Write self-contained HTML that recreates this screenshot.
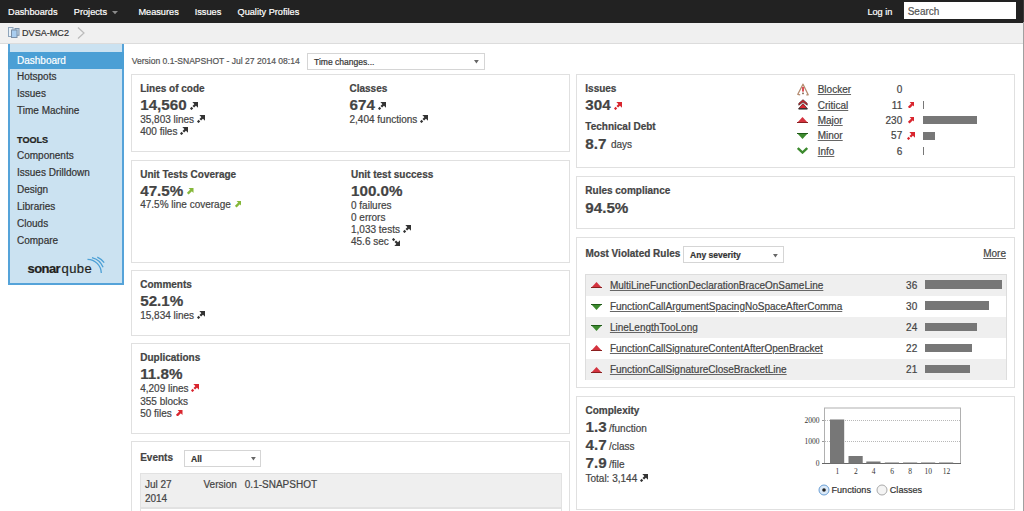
<!DOCTYPE html>
<html><head><meta charset="utf-8"><title>SonarQube Dashboard</title>
<style>
html,body{margin:0;padding:0;}
body{width:1024px;height:511px;overflow:hidden;position:relative;background:#fff;font-family:"Liberation Sans",sans-serif;}
.t{position:absolute;white-space:nowrap;line-height:1;-webkit-text-stroke:0.2px currentColor;}
.r{position:absolute;}
svg{display:block;}
u{text-decoration:underline;text-underline-offset:0.6px;text-decoration-color:#666;}
</style></head><body>
<div class="r" style="left:0px;top:0px;width:1024px;height:22.5px;background:#222;"></div>
<div class="t" style="left:8.00px;top:8.11px;font-size:9.2px;color:#fff;">Dashboards</div>
<div class="t" style="left:73.80px;top:8.11px;font-size:9.2px;color:#fff;">Projects</div>
<div class="t" style="left:138.40px;top:8.11px;font-size:9.2px;color:#fff;">Measures</div>
<div class="t" style="left:194.70px;top:8.11px;font-size:9.2px;color:#fff;">Issues</div>
<div class="t" style="left:237.50px;top:8.11px;font-size:9.2px;color:#fff;">Quality Profiles</div>
<div class="t" style="left:867.40px;top:8.11px;font-size:9.2px;color:#fff;">Log in</div>
<svg class="r" style="left:112.3px;top:10.5px" width="6" height="4"><polygon points="0,0 6,0 3,3.3" fill="#8a8a8a"/></svg>
<div class="r" style="left:904px;top:2px;width:111.5px;height:16.8px;background:#fff;"></div>
<div class="t" style="left:907.70px;top:6.83px;font-size:10px;color:#555;">Search</div>
<div class="r" style="left:0px;top:22.5px;width:1024px;height:21.5px;background:#f0f0f0;border-bottom:1px solid #dcdcdc;box-sizing:border-box;"></div>
<div class="t" style="left:22.00px;top:28.59px;font-size:9.1px;color:#333;">DVSA-MC2</div>
<svg class="r" style="left:77px;top:27px" width="8" height="12"><polyline points="1,0.5 7,6 1,11.5" fill="none" stroke="#bbb" stroke-width="1.2"/></svg>
<svg class="r" style="left:7px;top:26px" width="14" height="14" viewBox="7 26 14 14"><rect x="8.5" y="27.5" width="4.5" height="9" fill="#e8f0f7" stroke="#8fa5bb" stroke-width="1"/><rect x="15" y="28.5" width="4" height="6.8" fill="#c6dcef" stroke="#7d93ab" stroke-width="1"/><rect x="11.5" y="30" width="5.5" height="7.5" fill="#a9cdef" stroke="#7b8fa6" stroke-width="1"/></svg>
<div class="r" style="left:1023px;top:22px;width:1px;height:489px;background:#a0a0a0;"></div>
<div class="r" style="left:1023px;top:0px;width:1px;height:22px;background:#3a3a3a;"></div>
<div class="r" style="left:8px;top:44px;width:116px;height:241px;background:#cbe2f1;border:2px solid #55a3d9;border-top:none;box-sizing:border-box;"></div>
<div class="r" style="left:8px;top:52px;width:116px;height:17px;background:#4b9fd5;"></div>
<div class="t" style="left:17.00px;top:55.53px;font-size:10px;color:#fff;">Dashboard</div>
<div class="t" style="left:17.00px;top:72.33px;font-size:10px;color:#333;">Hotspots</div>
<div class="t" style="left:17.00px;top:89.23px;font-size:10px;color:#333;">Issues</div>
<div class="t" style="left:17.00px;top:106.13px;font-size:10px;color:#333;">Time Machine</div>
<div class="t" style="left:17.00px;top:135.69px;font-size:9.1px;font-weight:bold;color:#222;">TOOLS</div>
<div class="t" style="left:17.00px;top:151.03px;font-size:10px;color:#333;">Components</div>
<div class="t" style="left:17.00px;top:168.03px;font-size:10px;color:#333;">Issues Drilldown</div>
<div class="t" style="left:17.00px;top:185.03px;font-size:10px;color:#333;">Design</div>
<div class="t" style="left:17.00px;top:202.03px;font-size:10px;color:#333;">Libraries</div>
<div class="t" style="left:17.00px;top:219.03px;font-size:10px;color:#333;">Clouds</div>
<div class="t" style="left:17.00px;top:236.03px;font-size:10px;color:#333;">Compare</div>
<div class="t" style="left:27.60px;top:262.09px;font-size:13px;font-weight:bold;color:#231f20;letter-spacing:-0.6px;">sonar</div>
<div class="t" style="left:61.50px;top:262.09px;font-size:13px;color:#231f20;letter-spacing:0.4px;">qube</div>
<svg class="r" style="left:80px;top:250px" width="30" height="30" viewBox="80 250 30 30"><g fill="none" stroke="#4b9fd5" stroke-width="1.3"><path d="M87.5,259.3 A14,14 0 0 1 101.3,273"/><path d="M92,257.6 A16.4,16.4 0 0 1 103.1,267.3"/><path d="M97.3,257.2 A19.2,19.2 0 0 1 104.2,262.6"/></g></svg>
<div class="t" style="left:131.70px;top:56.76px;font-size:8.55px;color:#555;">Version 0.1-SNAPSHOT - Jul 27 2014 08:14</div>
<div class="r" style="left:307px;top:53px;width:178px;height:16.5px;background:#fff;border:1px solid #d5d5d5;box-sizing:border-box;"></div>
<div class="t" style="left:314.00px;top:58.26px;font-size:8.55px;color:#333;">Time changes...</div>
<svg class="r" style="left:474.2px;top:60.3px" width="5" height="4"><polygon points="0,0 4.8,0 2.4,3.6" fill="#666"/></svg>
<div class="r" style="left:131px;top:74px;width:439px;height:78px;border:1px solid #e0e0e0;box-sizing:border-box;background:#fff;"></div>
<div class="r" style="left:131px;top:160px;width:439px;height:103px;border:1px solid #e0e0e0;box-sizing:border-box;background:#fff;"></div>
<div class="r" style="left:131px;top:270px;width:439px;height:66px;border:1px solid #e0e0e0;box-sizing:border-box;background:#fff;"></div>
<div class="r" style="left:131px;top:343px;width:439px;height:91px;border:1px solid #e0e0e0;box-sizing:border-box;background:#fff;"></div>
<div class="r" style="left:131px;top:441px;width:439px;height:80px;border:1px solid #e0e0e0;box-sizing:border-box;background:#fff;"></div>
<div class="r" style="left:576px;top:74px;width:439px;height:94px;border:1px solid #e0e0e0;box-sizing:border-box;background:#fff;"></div>
<div class="r" style="left:576px;top:176px;width:439px;height:53px;border:1px solid #e0e0e0;box-sizing:border-box;background:#fff;"></div>
<div class="r" style="left:576px;top:237px;width:439px;height:151px;border:1px solid #e0e0e0;box-sizing:border-box;background:#fff;"></div>
<div class="r" style="left:576px;top:396px;width:439px;height:113.5px;border:1px solid #e0e0e0;box-sizing:border-box;background:#fff;"></div>
<div class="t" style="left:140.20px;top:83.63px;font-size:10px;font-weight:bold;color:#444;">Lines of code</div>
<div class="t" style="left:140.20px;top:96.93px;font-size:15.2px;font-weight:bold;color:#444;">14,560</div>
<div class="t" style="left:140.20px;top:114.63px;font-size:10px;color:#444;">35,803 lines</div>
<div class="t" style="left:140.20px;top:126.63px;font-size:10px;color:#444;">400 files</div>
<div class="t" style="left:349.50px;top:83.63px;font-size:10px;font-weight:bold;color:#444;">Classes</div>
<div class="t" style="left:349.50px;top:96.93px;font-size:15.2px;font-weight:bold;color:#444;">674</div>
<div class="t" style="left:349.50px;top:114.63px;font-size:10px;color:#444;">2,404 functions</div>
<div class="t" style="left:140.20px;top:169.53px;font-size:10px;font-weight:bold;color:#444;">Unit Tests Coverage</div>
<div class="t" style="left:140.20px;top:182.83px;font-size:15.2px;font-weight:bold;color:#444;">47.5%</div>
<div class="t" style="left:140.20px;top:200.33px;font-size:10px;color:#444;">47.5% line coverage</div>
<div class="t" style="left:351.00px;top:169.53px;font-size:10px;font-weight:bold;color:#444;">Unit test success</div>
<div class="t" style="left:351.00px;top:182.83px;font-size:15.2px;font-weight:bold;color:#444;">100.0%</div>
<div class="t" style="left:351.00px;top:201.23px;font-size:10px;color:#444;">0 failures</div>
<div class="t" style="left:351.00px;top:212.63px;font-size:10px;color:#444;">0 errors</div>
<div class="t" style="left:351.00px;top:225.13px;font-size:10px;color:#444;">1,033 tests</div>
<div class="t" style="left:351.00px;top:236.83px;font-size:10px;color:#444;">45.6 sec</div>
<div class="t" style="left:140.20px;top:279.63px;font-size:10px;font-weight:bold;color:#444;">Comments</div>
<div class="t" style="left:140.20px;top:293.03px;font-size:15.2px;font-weight:bold;color:#444;">52.1%</div>
<div class="t" style="left:140.20px;top:310.53px;font-size:10px;color:#444;">15,834 lines</div>
<div class="t" style="left:140.20px;top:353.03px;font-size:10px;font-weight:bold;color:#444;">Duplications</div>
<div class="t" style="left:140.20px;top:366.13px;font-size:15.2px;font-weight:bold;color:#444;">11.8%</div>
<div class="t" style="left:140.20px;top:384.43px;font-size:10px;color:#444;">4,209 lines</div>
<div class="t" style="left:140.20px;top:396.63px;font-size:10px;color:#444;">355 blocks</div>
<div class="t" style="left:140.20px;top:408.83px;font-size:10px;color:#444;">50 files</div>
<div class="t" style="left:140.20px;top:452.83px;font-size:10px;font-weight:bold;color:#444;">Events</div>
<div class="r" style="left:184px;top:450px;width:77px;height:17px;background:#fff;border:1px solid #d5d5d5;box-sizing:border-box;"></div>
<div class="t" style="left:191.00px;top:455.06px;font-size:8.55px;font-weight:bold;color:#333;">All</div>
<svg class="r" style="left:251.2px;top:457.4px" width="5" height="4"><polygon points="0,0 4.8,0 2.4,3.6" fill="#666"/></svg>
<div class="r" style="left:140px;top:473.2px;width:422px;height:35px;background:#efefef;border:1px solid #e2e2e2;box-sizing:border-box;"></div>
<div class="r" style="left:140px;top:508px;width:422px;height:10px;border:1px solid #e2e2e2;box-sizing:border-box;"></div>
<div class="t" style="left:144.90px;top:479.73px;font-size:10px;color:#444;">Jul 27</div>
<div class="t" style="left:144.90px;top:494.03px;font-size:10px;color:#444;">2014</div>
<div class="t" style="left:203.50px;top:479.73px;font-size:10px;color:#444;">Version</div>
<div class="t" style="left:244.80px;top:479.73px;font-size:10px;color:#444;">0.1-SNAPSHOT</div>
<div class="t" style="left:585.30px;top:83.73px;font-size:10px;font-weight:bold;color:#444;">Issues</div>
<div class="t" style="left:585.30px;top:96.83px;font-size:15.2px;font-weight:bold;color:#444;">304</div>
<div class="t" style="left:585.30px;top:122.33px;font-size:10px;font-weight:bold;color:#444;">Technical Debt</div>
<div class="t" style="left:585.30px;top:135.63px;font-size:15.2px;font-weight:bold;color:#444;">8.7</div>
<div class="t" style="left:611.00px;top:140.03px;font-size:10px;color:#444;">days</div>
<div class="t" style="left:817.70px;top:85.33px;font-size:10px;color:#444;"><u>Blocker</u></div>
<div class="t" style="right:121.80px;top:85.33px;font-size:10px;color:#444;">0</div>
<div class="t" style="left:817.70px;top:100.73px;font-size:10px;color:#444;"><u>Critical</u></div>
<div class="t" style="right:121.80px;top:100.73px;font-size:10px;color:#444;">11</div>
<div class="r" style="left:922.8px;top:100.7px;width:1px;height:8.5px;background:#777;"></div>
<div class="t" style="left:817.70px;top:116.13px;font-size:10px;color:#444;"><u>Major</u></div>
<div class="t" style="right:121.80px;top:116.13px;font-size:10px;color:#444;">230</div>
<div class="r" style="left:922.8px;top:116.39999999999999px;width:54px;height:8px;background:#777;"></div>
<div class="t" style="left:817.70px;top:131.43px;font-size:10px;color:#444;"><u>Minor</u></div>
<div class="t" style="right:121.80px;top:131.43px;font-size:10px;color:#444;">57</div>
<div class="r" style="left:922.8px;top:131.70000000000002px;width:12px;height:8px;background:#777;"></div>
<div class="t" style="left:817.70px;top:146.63px;font-size:10px;color:#444;"><u>Info</u></div>
<div class="t" style="right:121.80px;top:146.63px;font-size:10px;color:#444;">6</div>
<div class="r" style="left:922.8px;top:146.6px;width:1px;height:8.5px;background:#777;"></div>
<svg class="r" style="left:797px;top:82.5px" width="12" height="13" viewBox="0 0 12 13"><polyline points="9.3,11.8 11.2,11.8 6,1.2 0.8,11.3 3.2,11.8" fill="none" stroke="#b58c70" stroke-width="1.3" stroke-linejoin="round"/><rect x="5.2" y="4" width="1.6" height="4.6" fill="#d4262f"/><rect x="5.2" y="9.6" width="1.6" height="1.6" fill="#7a5a45"/></svg>
<svg class="r" style="left:797.5px;top:99px" width="10" height="11" viewBox="0 0 10 11"><path d="M5,0.7 L9.2,4.3 L9.2,6.2 L5,3 L0.8,6.2 L0.8,4.3 Z" fill="#d9262f" stroke="#3a2020" stroke-width="0.7"/><path d="M5,4.6 L9.4,9.6 L0.6,9.6 Z" fill="#d9262f" stroke="#2a1a1a" stroke-width="0.6"/><rect x="0.6" y="9.3" width="8.8" height="1.2" fill="#222"/></svg>
<svg class="r" style="left:797px;top:116.5px" width="11" height="6" viewBox="0 0 11 6"><polygon points="5.5,0 11,6 0,6" fill="#d4333f"/><rect x="0" y="5" width="11" height="1" fill="#8a1f1f"/></svg>
<svg class="r" style="left:797px;top:133px" width="11" height="6" viewBox="0 0 11 6"><polygon points="0,0 11,0 5.5,6" fill="#3c8a2e"/><rect x="0" y="0" width="11" height="1" fill="#1f5a17"/></svg>
<svg class="r" style="left:797px;top:147px" width="11" height="7" viewBox="0 0 11 7"><polyline points="0.8,1 5.5,5.5 10.2,1" fill="none" stroke="#3c8a2e" stroke-width="2.4"/></svg>
<div class="t" style="left:585.30px;top:186.23px;font-size:10px;font-weight:bold;color:#444;">Rules compliance</div>
<div class="t" style="left:585.30px;top:199.63px;font-size:15.2px;font-weight:bold;color:#444;">94.5%</div>
<div class="t" style="left:585.50px;top:249.13px;font-size:10px;font-weight:bold;color:#444;">Most Violated Rules</div>
<div class="r" style="left:683px;top:246px;width:101px;height:16.5px;background:#fff;border:1px solid #d5d5d5;box-sizing:border-box;"></div>
<div class="t" style="left:690.00px;top:251.46px;font-size:8.55px;font-weight:bold;color:#333;">Any severity</div>
<svg class="r" style="left:773.4px;top:253.6px" width="5" height="4"><polygon points="0,0 4.8,0 2.4,3.6" fill="#666"/></svg>
<div class="t" style="left:983.20px;top:248.83px;font-size:10px;color:#444;"><u>More</u></div>
<div class="r" style="left:585px;top:274px;width:422px;height:106px;border:1px solid #ddd;box-sizing:border-box;"></div>
<div class="r" style="left:586px;top:275.0px;width:420px;height:21.1px;background:#efefef;"></div>
<div class="t" style="left:609.90px;top:280.63px;font-size:10px;color:#444;"><u>MultiLineFunctionDeclarationBraceOnSameLine</u></div>
<div class="t" style="right:106.80px;top:280.63px;font-size:10px;color:#444;">36</div>
<div class="r" style="left:925px;top:280.3px;width:77px;height:8.5px;background:#777;"></div>
<svg class="r" style="left:590.5px;top:282.1px" width="11" height="6" viewBox="0 0 11 6"><polygon points="5.5,0 11,6 0,6" fill="#d4333f"/><rect x="0" y="5" width="11" height="1" fill="#8a1f1f"/></svg>
<div class="t" style="left:609.90px;top:301.73px;font-size:10px;color:#444;"><u>FunctionCallArgumentSpacingNoSpaceAfterComma</u></div>
<div class="t" style="right:106.80px;top:301.73px;font-size:10px;color:#444;">30</div>
<div class="r" style="left:925px;top:301.40000000000003px;width:64px;height:8.5px;background:#777;"></div>
<svg class="r" style="left:590.5px;top:304.2px" width="11" height="6" viewBox="0 0 11 6"><polygon points="0,0 11,0 5.5,6" fill="#3c8a2e"/><rect x="0" y="0" width="11" height="1" fill="#1f5a17"/></svg>
<div class="r" style="left:586px;top:317.2px;width:420px;height:21.1px;background:#efefef;"></div>
<div class="t" style="left:609.90px;top:322.83px;font-size:10px;color:#444;"><u>LineLengthTooLong</u></div>
<div class="t" style="right:106.80px;top:322.83px;font-size:10px;color:#444;">24</div>
<div class="r" style="left:925px;top:322.5px;width:52px;height:8.5px;background:#777;"></div>
<svg class="r" style="left:590.5px;top:325.3px" width="11" height="6" viewBox="0 0 11 6"><polygon points="0,0 11,0 5.5,6" fill="#3c8a2e"/><rect x="0" y="0" width="11" height="1" fill="#1f5a17"/></svg>
<div class="t" style="left:609.90px;top:343.93px;font-size:10px;color:#444;"><u>FunctionCallSignatureContentAfterOpenBracket</u></div>
<div class="t" style="right:106.80px;top:343.93px;font-size:10px;color:#444;">22</div>
<div class="r" style="left:925px;top:343.6px;width:47px;height:8.5px;background:#777;"></div>
<svg class="r" style="left:590.5px;top:345.4px" width="11" height="6" viewBox="0 0 11 6"><polygon points="5.5,0 11,6 0,6" fill="#d4333f"/><rect x="0" y="5" width="11" height="1" fill="#8a1f1f"/></svg>
<div class="r" style="left:586px;top:359.4px;width:420px;height:21.1px;background:#efefef;"></div>
<div class="t" style="left:609.90px;top:365.03px;font-size:10px;color:#444;"><u>FunctionCallSignatureCloseBracketLine</u></div>
<div class="t" style="right:106.80px;top:365.03px;font-size:10px;color:#444;">21</div>
<div class="r" style="left:925px;top:364.7px;width:45px;height:8.5px;background:#777;"></div>
<svg class="r" style="left:590.5px;top:366.5px" width="11" height="6" viewBox="0 0 11 6"><polygon points="5.5,0 11,6 0,6" fill="#d4333f"/><rect x="0" y="5" width="11" height="1" fill="#8a1f1f"/></svg>
<div class="t" style="left:585.50px;top:405.93px;font-size:10px;font-weight:bold;color:#444;">Complexity</div>
<div class="t" style="left:585.50px;top:418.73px;font-size:15.2px;font-weight:bold;color:#444;">1.3</div>
<div class="t" style="left:609.00px;top:423.63px;font-size:10px;color:#444;">/function</div>
<div class="t" style="left:585.50px;top:437.13px;font-size:15.2px;font-weight:bold;color:#444;">4.7</div>
<div class="t" style="left:609.00px;top:442.03px;font-size:10px;color:#444;">/class</div>
<div class="t" style="left:585.50px;top:455.23px;font-size:15.2px;font-weight:bold;color:#444;">7.9</div>
<div class="t" style="left:609.00px;top:460.13px;font-size:10px;color:#444;">/file</div>
<div class="t" style="left:585.50px;top:473.73px;font-size:10px;color:#444;">Total: 3,144</div>
<svg class="r" style="left:800px;top:400px" width="170" height="80" viewBox="800 400 170 80">
<rect x="824.5" y="408" width="136" height="55.5" fill="none" stroke="#b0b0b0" stroke-width="1"/>
<line x1="824" y1="463.5" x2="961" y2="463.5" stroke="#666" stroke-width="1"/>
<line x1="825" y1="420.5" x2="960" y2="420.5" stroke="#b8b8b8" stroke-width="1" stroke-dasharray="1,1"/>
<line x1="825" y1="441.5" x2="960" y2="441.5" stroke="#b8b8b8" stroke-width="1" stroke-dasharray="1,1"/>
<line x1="822" y1="420.5" x2="824" y2="420.5" stroke="#999" stroke-width="1"/>
<line x1="822" y1="441.5" x2="824" y2="441.5" stroke="#999" stroke-width="1"/>
<line x1="822" y1="463.5" x2="824" y2="463.5" stroke="#666" stroke-width="1"/>
<g fill="#777">
<rect x="830" y="419.5" width="14.2" height="44"/>
<rect x="848.5" y="456" width="14.2" height="7.5"/>
<rect x="866.3" y="461.5" width="14.2" height="2"/>
<rect x="884.8" y="462.5" width="14.2" height="1"/>
<rect x="903" y="462.5" width="14.2" height="1"/>
<rect x="921" y="462.5" width="14.2" height="1"/>
<rect x="939" y="462.5" width="14.2" height="1"/>
</g>
<g font-family="Liberation Serif" font-size="7.5" fill="#333" text-anchor="end">
<text x="819.5" y="423">2000</text><text x="819.5" y="444">1000</text><text x="819.5" y="466">0</text>
</g>
<g font-family="Liberation Serif" font-size="7.5" fill="#333" text-anchor="middle">
<text x="837.3" y="473.5">1</text><text x="855.8" y="473.5">2</text><text x="873.7" y="473.5">4</text><text x="892" y="473.5">6</text><text x="910.2" y="473.5">8</text><text x="928.3" y="473.5">10</text><text x="946.4" y="473.5">12</text>
</g>
</svg>
<svg class="r" style="left:818px;top:484px" width="12" height="12" viewBox="0 0 12 12"><circle cx="6" cy="6" r="5" fill="#dbe9f7" stroke="#6a9fd6" stroke-width="1"/><circle cx="6" cy="6" r="1.8" fill="#222"/></svg>
<div class="t" style="left:831.50px;top:485.79px;font-size:9.1px;color:#333;">Functions</div>
<svg class="r" style="left:876px;top:484px" width="12" height="12" viewBox="0 0 12 12"><circle cx="6" cy="6" r="5" fill="#f4f4f4" stroke="#aaa" stroke-width="1"/></svg>
<div class="t" style="left:889.80px;top:485.79px;font-size:9.1px;color:#333;">Classes</div>
<div class="r" style="left:190.3px;top:101.8px;width:8px;height:8px"><svg width="8" height="8" viewBox="0 0 8 8"><polygon points="2.3,0 8,0 8,5.7" fill="#333"/><line x1="5.8" y1="2.2" x2="3.3" y2="4.7" stroke="#333" stroke-width="2.3"/><line x1="2.4" y1="5.6" x2="0.7" y2="7.3" stroke="#333" stroke-width="2.2"/></svg></div>
<div class="r" style="left:197.2px;top:115.1px;width:8px;height:8px"><svg width="8" height="8" viewBox="0 0 8 8"><polygon points="2.3,0 8,0 8,5.7" fill="#333"/><line x1="5.8" y1="2.2" x2="3.3" y2="4.7" stroke="#333" stroke-width="2.3"/><line x1="2.4" y1="5.6" x2="0.7" y2="7.3" stroke="#333" stroke-width="2.2"/></svg></div>
<div class="r" style="left:180.2px;top:127.2px;width:8px;height:8px"><svg width="8" height="8" viewBox="0 0 8 8"><polygon points="2.3,0 8,0 8,5.7" fill="#333"/><line x1="5.8" y1="2.2" x2="3.3" y2="4.7" stroke="#333" stroke-width="2.3"/><line x1="2.4" y1="5.6" x2="0.7" y2="7.3" stroke="#333" stroke-width="2.2"/></svg></div>
<div class="r" style="left:378.2px;top:102.0px;width:8px;height:8px"><svg width="8" height="8" viewBox="0 0 8 8"><polygon points="2.3,0 8,0 8,5.7" fill="#333"/><line x1="5.8" y1="2.2" x2="3.3" y2="4.7" stroke="#333" stroke-width="2.3"/><line x1="2.4" y1="5.6" x2="0.7" y2="7.3" stroke="#333" stroke-width="2.2"/></svg></div>
<div class="r" style="left:420.4px;top:115.3px;width:8px;height:8px"><svg width="8" height="8" viewBox="0 0 8 8"><polygon points="2.3,0 8,0 8,5.7" fill="#333"/><line x1="5.8" y1="2.2" x2="3.3" y2="4.7" stroke="#333" stroke-width="2.3"/><line x1="2.4" y1="5.6" x2="0.7" y2="7.3" stroke="#333" stroke-width="2.2"/></svg></div>
<div class="r" style="left:187.4px;top:188.4px;width:6.5px;height:6.5px"><svg width="6.5" height="6.5" viewBox="0 0 6.5 6.5"><polygon points="1.6,0 6.5,0 6.5,4.9" fill="#85b83a"/><line x1="4.6" y1="1.9" x2="0.8" y2="5.7" stroke="#85b83a" stroke-width="2.3"/></svg></div>
<div class="r" style="left:234.5px;top:201.2px;width:6.5px;height:6.5px"><svg width="6.5" height="6.5" viewBox="0 0 6.5 6.5"><polygon points="1.6,0 6.5,0 6.5,4.9" fill="#85b83a"/><line x1="4.6" y1="1.9" x2="0.8" y2="5.7" stroke="#85b83a" stroke-width="2.3"/></svg></div>
<div class="r" style="left:402.9px;top:225.1px;width:8px;height:8px"><svg width="8" height="8" viewBox="0 0 8 8"><polygon points="2.3,0 8,0 8,5.7" fill="#333"/><line x1="5.8" y1="2.2" x2="3.3" y2="4.7" stroke="#333" stroke-width="2.3"/><line x1="2.4" y1="5.6" x2="0.7" y2="7.3" stroke="#333" stroke-width="2.2"/></svg></div>
<div class="r" style="left:392.2px;top:238.1px;width:8px;height:8px"><svg width="8" height="8" viewBox="0 0 8 8"><polygon points="8,2.3 8,8 2.3,8" fill="#333"/><line x1="5.8" y1="5.8" x2="3.3" y2="3.3" stroke="#333" stroke-width="2.3"/><line x1="2.4" y1="2.4" x2="0.7" y2="0.7" stroke="#333" stroke-width="2.2"/></svg></div>
<div class="r" style="left:197.3px;top:311.0px;width:8px;height:8px"><svg width="8" height="8" viewBox="0 0 8 8"><polygon points="2.3,0 8,0 8,5.7" fill="#333"/><line x1="5.8" y1="2.2" x2="3.3" y2="4.7" stroke="#333" stroke-width="2.3"/><line x1="2.4" y1="5.6" x2="0.7" y2="7.3" stroke="#333" stroke-width="2.2"/></svg></div>
<div class="r" style="left:191.0px;top:384.0px;width:8px;height:8px"><svg width="8" height="8" viewBox="0 0 8 8"><polygon points="2.3,0 8,0 8,5.7" fill="#d9262f"/><line x1="5.8" y1="2.2" x2="3.3" y2="4.7" stroke="#d9262f" stroke-width="2.3"/><line x1="2.4" y1="5.6" x2="0.7" y2="7.3" stroke="#d9262f" stroke-width="2.2"/></svg></div>
<div class="r" style="left:176.0px;top:409.6px;width:6.5px;height:6.5px"><svg width="6.5" height="6.5" viewBox="0 0 6.5 6.5"><polygon points="1.6,0 6.5,0 6.5,4.9" fill="#d9262f"/><line x1="4.6" y1="1.9" x2="0.8" y2="5.7" stroke="#d9262f" stroke-width="2.3"/></svg></div>
<div class="r" style="left:613.9px;top:101.8px;width:8px;height:8px"><svg width="8" height="8" viewBox="0 0 8 8"><polygon points="2.3,0 8,0 8,5.7" fill="#d9262f"/><line x1="5.8" y1="2.2" x2="3.3" y2="4.7" stroke="#d9262f" stroke-width="2.3"/><line x1="2.4" y1="5.6" x2="0.7" y2="7.3" stroke="#d9262f" stroke-width="2.2"/></svg></div>
<div class="r" style="left:907.6px;top:101.7px;width:6.5px;height:6.5px"><svg width="6.5" height="6.5" viewBox="0 0 6.5 6.5"><polygon points="1.6,0 6.5,0 6.5,4.9" fill="#d9262f"/><line x1="4.6" y1="1.9" x2="0.8" y2="5.7" stroke="#d9262f" stroke-width="2.3"/></svg></div>
<div class="r" style="left:907.6px;top:117.2px;width:6.5px;height:6.5px"><svg width="6.5" height="6.5" viewBox="0 0 6.5 6.5"><polygon points="1.6,0 6.5,0 6.5,4.9" fill="#d9262f"/><line x1="4.6" y1="1.9" x2="0.8" y2="5.7" stroke="#d9262f" stroke-width="2.3"/></svg></div>
<div class="r" style="left:906.8px;top:131.8px;width:8px;height:8px"><svg width="8" height="8" viewBox="0 0 8 8"><polygon points="2.3,0 8,0 8,5.7" fill="#d9262f"/><line x1="5.8" y1="2.2" x2="3.3" y2="4.7" stroke="#d9262f" stroke-width="2.3"/><line x1="2.4" y1="5.6" x2="0.7" y2="7.3" stroke="#d9262f" stroke-width="2.2"/></svg></div>
<div class="r" style="left:640.2px;top:473.8px;width:8px;height:8px"><svg width="8" height="8" viewBox="0 0 8 8"><polygon points="2.3,0 8,0 8,5.7" fill="#333"/><line x1="5.8" y1="2.2" x2="3.3" y2="4.7" stroke="#333" stroke-width="2.3"/><line x1="2.4" y1="5.6" x2="0.7" y2="7.3" stroke="#333" stroke-width="2.2"/></svg></div>
</body></html>
